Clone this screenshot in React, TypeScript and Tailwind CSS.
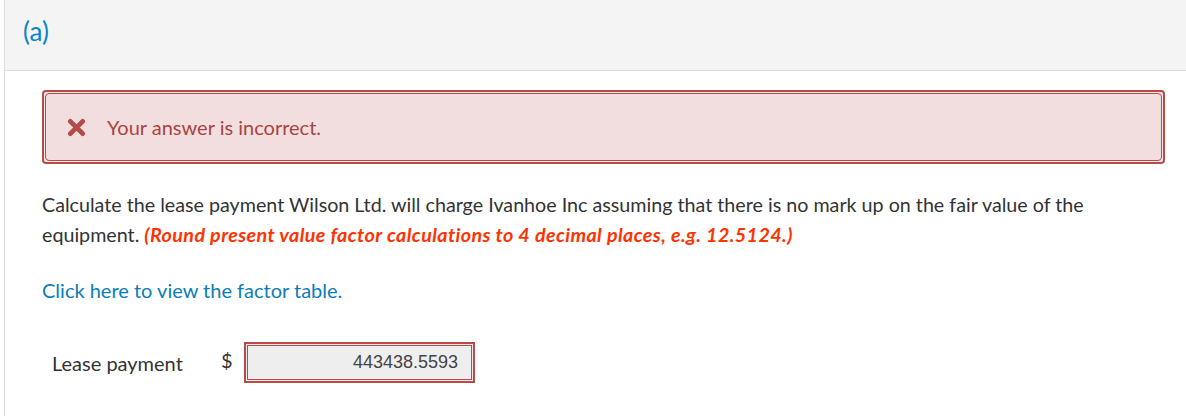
const App = () => {
  return (
    <div className="min-h-[416px] bg-white pl-1" style={{ fontFamily: "Lato, 'Noto Sans', sans-serif" }}>
      <div className="min-h-[416px] border-l border-[#dddddd]">
        {/* Part header */}
        <div className="h-[71px] bg-[#f4f4f4] border-b border-[#dddddd] pl-[18px] flex items-center">
          <span className="text-[26px] text-[#0b85c6] leading-none -mt-[8px]">(a)</span>
        </div>

        <div className="pl-[37px] pr-[21px] pt-[19px]">
          {/* Error alert */}
          <div className="rounded border-2 border-[#b94a48] bg-[#f8eaea] p-px">
            <div className="h-[68px] rounded-sm border border-[#b94a48] bg-[#f2dede] flex items-center pl-[21px] gap-[21px]">
              <svg width="19" height="19" viewBox="0 0 20 20" className="shrink-0">
                <path d="M3.5 3.5 L16.5 16.5 M16.5 3.5 L3.5 16.5" stroke="#b44a4a" strokeWidth="5" strokeLinecap="round" />
              </svg>
              <span className="text-[20px] text-[#a94442]">Your answer is incorrect.</span>
            </div>
          </div>

          {/* Question */}
          <p className="mt-[26px] text-[19.7px] leading-[30px] text-[#333333]">
            Calculate the lease payment Wilson Ltd. will charge Ivanhoe Inc assuming that there is no mark up on the fair value of the equipment.{" "}
            <span className="font-bold italic text-[#ff3300] tracking-[0.4px]">
              (Round present value factor calculations to 4 decimal places, e.g. 12.5124.)
            </span>
          </p>

          <p className="mt-[25px] text-[20px] leading-[30px]">
            <a className="text-[#0b7db8] cursor-pointer">Click here to view the factor table.</a>
          </p>

          {/* Answer row */}
          <div className="mt-[37px] flex items-center pl-[10px]">
            <span className="text-[20px] text-[#333333] w-[169px]">Lease payment</span>
            <span className="text-[20px] text-[#333333] w-[23px] -mt-[6px]">$</span>
            <div className="w-[231px] h-[41px] border-2 border-[#b94a48] bg-[#f8eaea] p-px">
              <div className="h-full border border-[#b94a48] bg-[#eeeeee] flex items-center justify-end pr-[13px]">
                <span className="text-[18px] text-[#444444]" style={{ fontFamily: "'Liberation Sans', Arial, sans-serif" }}>
                  443438.5593
                </span>
              </div>
            </div>
          </div>
        </div>
      </div>
    </div>
  );
};

export default App;
